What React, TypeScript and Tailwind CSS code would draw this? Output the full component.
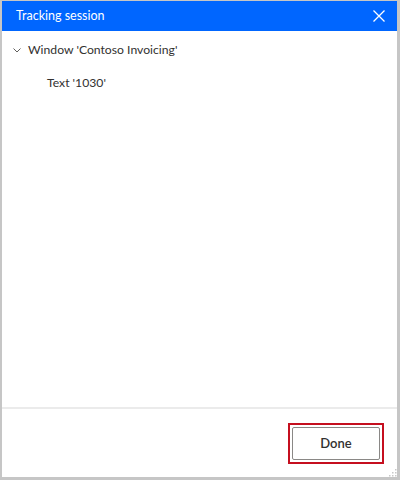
import React from "react";

export default function App() {
  return (
    <div className="w-[400px] h-[480px] bg-[#c6c6c6] pt-px pl-[2px] pr-[3px] pb-[3px] flex" style={{ fontFamily: 'Lato, "Open Sans", sans-serif' }}>
      <div className="flex-1 flex flex-col bg-white relative">
        <div className="h-[30px] bg-[#0066ff] flex items-center justify-between pl-[14px] pr-[10px]">
          <span className="text-white text-[12.5px]">Tracking session</span>
          <svg width="14" height="14" viewBox="0 0 14 14" className="mr-[1px]">
            <path d="M1.5 1.5 L12.5 12.5 M12.5 1.5 L1.5 12.5" stroke="white" strokeWidth="1.3" />
          </svg>
        </div>
        <div className="flex-1 pt-[9px]">
          <div className="flex items-center h-[20px] pl-[10px] text-[12.2px] text-[#323130]">
            <svg width="10" height="10" viewBox="0 0 10 10" className="mr-[6px]">
              <path d="M1.5 3.5 L5 7 L8.5 3.5" stroke="#605e5c" strokeWidth="1" fill="none" />
            </svg>
            <span>Window 'Contoso Invoicing'</span>
          </div>
          <div className="flex items-center h-[20px] mt-[13px] pl-[45px] text-[12.2px] text-[#323130]">
            <span>Text '1030'</span>
          </div>
        </div>
        <div className="h-[2px] bg-[#ebebeb]" />
        <div className="h-[68px] flex justify-end items-start pt-[14px] pr-[13px]">
          <div className="border-2 border-[#c50f1f] p-[2px]">
            <button className="w-[88px] h-[33px] border border-[#8a8886] rounded-[2px] bg-white text-[13px] font-semibold text-[#323130]">
              Done
            </button>
          </div>
        </div>
        <svg width="8" height="8" viewBox="0 0 8 8" className="absolute right-0 bottom-0">
          <rect x="6" y="0" width="1.5" height="1.5" fill="#c8c8c8" />
          <rect x="3" y="3" width="1.5" height="1.5" fill="#c8c8c8" />
          <rect x="6" y="3" width="1.5" height="1.5" fill="#c8c8c8" />
          <rect x="0" y="6" width="1.5" height="1.5" fill="#c8c8c8" />
          <rect x="3" y="6" width="1.5" height="1.5" fill="#c8c8c8" />
          <rect x="6" y="6" width="1.5" height="1.5" fill="#c8c8c8" />
        </svg>
      </div>
    </div>
  );
}
